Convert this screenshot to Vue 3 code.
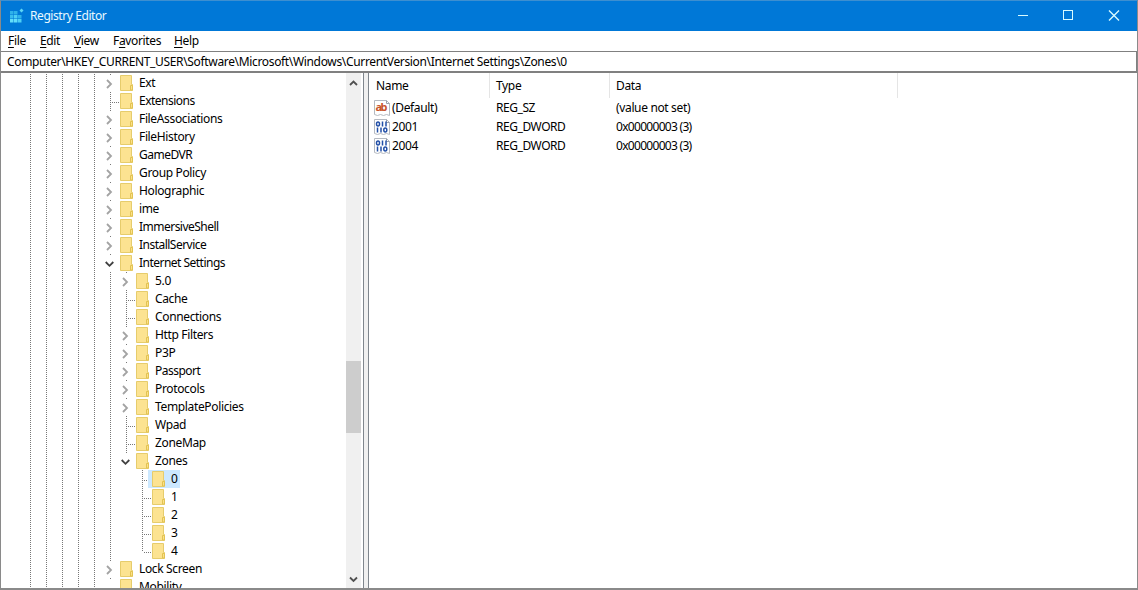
<template>
  <div class="window">
    <header class="titlebar">
      <svg class="app-icon" width="16" height="16" viewBox="0 0 16 16">
        <rect v-for="b in blocks" :key="b.x + '-' + b.y" :x="b.x" :y="b.y" width="3.500" height="3.500" :fill="b.fill" />
        <path d="M13.5 .5 L15.500 2.500 L13.5 4.500 L11.500 2.500 Z" fill="#5fd6f5" />
      </svg>
      <span class="title">Registry Editor</span>
      <div class="controls">
        <svg width="46" height="29"><path d="M18 14.5h10" /></svg>
        <svg width="45" height="29"><rect x="17.5" y="9.5" width="9" height="9" /></svg>
        <svg width="46" height="29"><path d="M18 9.5l10 10M28 9.5l-10 10" stroke-width="1.400" /></svg>
      </div>
    </header>

    <nav class="menu">
      <span v-for="item in menu" :key="item.text" :style="{ width: item.width + 'px' }">
        {{ item.before }}<u>{{ item.key }}</u>{{ item.after }}
      </span>
    </nav>

    <div class="address">Computer\HKEY_CURRENT_USER\Software\Microsoft\Windows\CurrentVersion\Internet Settings\Zones\0</div>

    <main class="panes">
      <section class="tree-pane">
        <div class="tree">
          <div v-for="node in nodes" :key="node.name" class="node">
            <i v-for="n in 5" :key="n" class="guide line"></i>
            <i v-for="n in node.level" :key="'p' + n" class="guide" :class="{ line: n < 2 || node.level < 2 }"></i>
            <span class="branch" :class="node.state">
              <svg v-if="node.state === 'closed'" width="9" height="10"><path d="M2 1l4 4l-4 4" stroke="#a3a3a3" /></svg>
              <svg v-else-if="node.state === 'open'" width="9" height="10"><path d="M.7 3l3.8 3.8l3.8-3.8" stroke="#404040" /></svg>
            </span>
            <span class="item" :class="{ selected: node.name === selected }" @click="selected = node.name">
              <svg class="folder" width="14" height="16">
                <path d="M.5 .5h11v9h1v6h-12z" fill="#fce391" stroke="#e6cc6c" />
                <path d="M10.5 15v-4.500h2v4.500z" fill="#fbe08a" stroke="#e2c352" />
              </svg>
              <span class="label" :class="{ tight: node.tight }">{{ node.name }}</span>
            </span>
          </div>
        </div>
        <div class="scrollbar">
          <svg width="15" height="17"><path d="M4 12l3.500-3.500l3.500 3.500" /></svg>
          <div class="track"><div class="thumb"></div></div>
          <svg width="15" height="17"><path d="M4 6.500l3.500 3.500l3.500-3.500" /></svg>
        </div>
      </section>

      <section class="list">
        <div class="head">
          <span class="name">Name</span>
          <span class="type">Type</span>
          <span class="data">Data</span>
        </div>
        <div v-for="value in values" :key="value.name" class="value">
          <span class="name">
            <svg width="16" height="16" viewBox="0 0 16 16">
              <path d="M.5 .5h12l3 3v12l-3-1l-3 1l-3-1l-3 1l-3-1z" fill="#fff" stroke="#b4b9c1" />
              <path d="M12.500 .5v3h3" fill="none" stroke="#9aa2af" />
              <text v-if="value.type === 'REG_SZ'" x="1.500" y="11" textLength="12" class="ab">ab</text>
              <g v-else fill="none" stroke="#2350a8" stroke-width="1.500">
                <ellipse cx="4" cy="5" rx="1.500" ry="2" />
                <path d="M8.500 2.500v5M12 2.500v5M3.500 8.500v5M7 8.500v5" />
                <ellipse cx="11.300" cy="11" rx="1.500" ry="2" />
              </g>
            </svg>
            {{ value.name }}
          </span>
          <span class="type">{{ value.type }}</span>
          <span class="data" :class="{ digits: value.type === 'REG_DWORD' }">{{ value.data }}</span>
        </div>
      </section>
    </main>
  </div>
</template>

<script setup>
import { ref } from 'vue';

const selected = ref('0');

const blocks = [
  { x: 2, y: 3, fill: '#2fb2ea' },
  { x: 6, y: 3, fill: '#2fb2ea' },
  { x: 2, y: 7, fill: '#39bdef' },
  { x: 6, y: 7, fill: '#4dcff5' },
  { x: 10, y: 7, fill: '#2fb2ea' },
  { x: 2, y: 11, fill: '#62ddfa' },
  { x: 6, y: 11, fill: '#62ddfa' },
  { x: 10, y: 11, fill: '#4dcff5' },
];

const menu = [
  { text: 'File', before: '', key: 'F', after: 'ile', width: 32 },
  { text: 'Edit', before: '', key: 'E', after: 'dit', width: 34 },
  { text: 'View', before: '', key: 'V', after: 'iew', width: 39 },
  { text: 'Favorites', before: 'F', key: 'a', after: 'vorites', width: 61 },
  { text: 'Help', before: '', key: 'H', after: 'elp', width: 40 },
];

const nodes = [
  { name: 'Ext', level: 0, state: 'closed' },
  { name: 'Extensions', level: 0, state: 'leaf', tight: true },
  { name: 'FileAssociations', level: 0, state: 'closed' },
  { name: 'FileHistory', level: 0, state: 'closed' },
  { name: 'GameDVR', level: 0, state: 'closed', tight: true },
  { name: 'Group Policy', level: 0, state: 'closed' },
  { name: 'Holographic', level: 0, state: 'closed' },
  { name: 'ime', level: 0, state: 'closed' },
  { name: 'ImmersiveShell', level: 0, state: 'closed', tight: true },
  { name: 'InstallService', level: 0, state: 'closed', tight: true },
  { name: 'Internet Settings', level: 0, state: 'open', tight: true },
  { name: '5.0', level: 1, state: 'closed' },
  { name: 'Cache', level: 1, state: 'leaf' },
  { name: 'Connections', level: 1, state: 'leaf' },
  { name: 'Http Filters', level: 1, state: 'closed' },
  { name: 'P3P', level: 1, state: 'closed' },
  { name: 'Passport', level: 1, state: 'closed', tight: true },
  { name: 'Protocols', level: 1, state: 'closed' },
  { name: 'TemplatePolicies', level: 1, state: 'closed' },
  { name: 'Wpad', level: 1, state: 'leaf' },
  { name: 'ZoneMap', level: 1, state: 'leaf' },
  { name: 'Zones', level: 1, state: 'open' },
  { name: '0', level: 2, state: 'leaf' },
  { name: '1', level: 2, state: 'leaf' },
  { name: '2', level: 2, state: 'leaf' },
  { name: '3', level: 2, state: 'leaf' },
  { name: '4', level: 2, state: 'leaf last' },
  { name: 'Lock Screen', level: 0, state: 'closed' },
  { name: 'Mobility', level: 0, state: 'hidden' },
];

const values = [
  { name: '(Default)', type: 'REG_SZ', data: '(value not set)' },
  { name: '2001', type: 'REG_DWORD', data: '0x00000003 (3)' },
  { name: '2004', type: 'REG_DWORD', data: '0x00000003 (3)' },
];
</script>

<style>
body {
  margin: 0;
  overflow: hidden;
}
</style>

<style scoped>
.window {
  box-sizing: border-box;
  width: 1138px;
  height: 590px;
  display: flex;
  flex-direction: column;
  border: 1px solid #8a8a8a;
  border-top-color: #3d8fd0;
  border-bottom-width: 2px;
  background: #fff;
  color: #000;
  font-family: "Noto Sans", "Open Sans", sans-serif;
  font-size: 12px;
  letter-spacing: -0.35px;
  white-space: nowrap;
  cursor: default;
}

.titlebar {
  height: 30px;
  display: flex;
  align-items: center;
  background: #0078d7;
  color: #e8f8ff;
}

.app-icon {
  margin: 0 6px 0 7px;
}

.title {
  padding-bottom: 1px;
  letter-spacing: -0.42px;
}

.controls {
  height: 29px;
  display: flex;
  margin-left: auto;
  align-self: flex-start;
}

.controls svg {
  fill: none;
  stroke: #d8fbff;
}

.menu {
  height: 20px;
  display: flex;
  padding-left: 7px;
  line-height: 19px;
}

.menu u {
  text-underline-offset: 2px;
}

.address {
  box-sizing: border-box;
  height: 22px;
  border: 1px solid #808080;
  border-bottom-width: 2px;
  border-left-width: 0;
  padding-left: 6px;
  line-height: 19px;
  letter-spacing: -0.34px;
}

.panes {
  flex: 1;
  min-height: 0;
  display: flex;
  background: #f0f0f0;
}

.tree-pane {
  box-sizing: border-box;
  width: 363px;
  display: flex;
  margin-right: 4px;
  padding-right: 2px;
  border-right: 1px solid #7f868d;
  background: #fff;
  overflow: hidden;
}

.tree {
  flex: 1;
  padding: 1px 0 0 21px;
  overflow: hidden;
}

.node {
  height: 18px;
  display: flex;
}

.guide {
  width: 16px;
  height: 18px;
}

.line,
.leaf {
  background: repeating-linear-gradient(#777 0 1px, transparent 1px 2px) 8px 0 / 1px 18px no-repeat;
}

.branch {
  width: 18px;
  height: 18px;
}

.branch svg {
  display: block;
  margin: 5px 0 0 3px;
  fill: none;
  stroke-width: 1.8;
}

.closed,
.open,
.hidden {
  background: linear-gradient(#777, #777) 8px 0 / 1px 1px no-repeat;
}

.leaf {
  background:
    repeating-linear-gradient(#777 0 1px, transparent 1px 2px) 8px 0 / 1px 18px no-repeat,
    repeating-linear-gradient(90deg, #777 0 1px, transparent 1px 2px) 10px 10px / 8px 1px no-repeat;
}

.leaf.last {
  background-size: 1px 10px, 8px 1px;
}

.item {
  height: 18px;
  display: flex;
}

.selected {
  margin-left: -4px;
  padding-left: 4px;
  background: #cce8ff;
}

.folder {
  margin-top: 1px;
}

.label {
  padding: 0 2px 0 5px;
  line-height: 18px;
}

.tight {
  letter-spacing: -0.52px;
}

.scrollbar {
  width: 15px;
  display: flex;
  flex-direction: column;
  background: #f0f0f0;
}

.scrollbar svg {
  fill: none;
  stroke: #505050;
  stroke-width: 1.8;
}

.track {
  flex: 1;
  padding-top: 271px;
}

.thumb {
  height: 72px;
  background: #cdcdcd;
}

.list {
  flex: 1;
  border-left: 1px solid #7f868d;
  background: #fff;
}

.head,
.value {
  display: flex;
}

.head {
  height: 25px;
  line-height: 25px;
}

.head span {
  box-sizing: border-box;
  border-right: 1px solid #e5e5e5;
  padding-left: 6px;
}

.value {
  height: 19px;
  line-height: 19px;
}

.value span {
  box-sizing: border-box;
  padding-left: 6px;
}

.name {
  width: 121px;
}

.head .name {
  padding-left: 7px;
}

.type {
  width: 120px;
}

.data {
  width: 288px;
}

.digits {
  letter-spacing: -0.7px;
}

.value .name {
  display: flex;
  align-items: center;
  gap: 2px;
  padding-left: 5px;
}

.value .type {
  letter-spacing: -0.45px;
}

.ab {
  font: bold 11px "Noto Sans", sans-serif;
  letter-spacing: 0;
  fill: #c8542c;
}
</style>
